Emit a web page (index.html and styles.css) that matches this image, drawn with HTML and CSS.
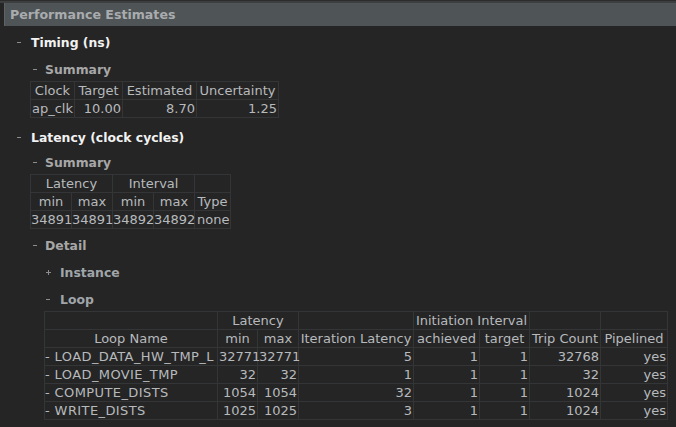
FILE: index.html
```html
<!DOCTYPE html>
<html>
<head>
<meta charset="utf-8">
<link rel="stylesheet" href="styles.css">
</head>
<body>
<div class="topstrip"></div>
<div class="titlebar">Performance Estimates</div>
<div class="content">
  <div class="node l1 timing"><span class="tg"><span class="minus"></span></span><span class="t1">Timing (ns)</span></div>
  <div class="node l2 sum1"><span class="tg"><span class="minus"></span></span><span class="t2">Summary</span></div>
  <table class="grid timingtab">
    <colgroup><col class="w44"><col class="w48"><col class="w74"><col class="w82"></colgroup>
    <tr><th>Clock</th><th>Target</th><th>Estimated</th><th>Uncertainty</th></tr>
    <tr><td class="l">ap_clk</td><td>10.00</td><td>8.70</td><td>1.25</td></tr>
  </table>
  <div class="node l1 lat"><span class="tg"><span class="minus"></span></span><span class="t1">Latency (clock cycles)</span></div>
  <div class="node l2 sum2"><span class="tg"><span class="minus"></span></span><span class="t2">Summary</span></div>
  <table class="grid lattab">
    <colgroup><col class="w41"><col class="w41"><col class="w41"><col class="w41"><col class="w36"></colgroup>
    <tr><th colspan="2">Latency</th><th colspan="2">Interval</th><th></th></tr>
    <tr><th>min</th><th>max</th><th>min</th><th>max</th><th>Type</th></tr>
    <tr><td>34891</td><td>34891</td><td>34892</td><td>34892</td><td class="l type">none</td></tr>
  </table>
  <div class="node l2 detail"><span class="tg"><span class="minus"></span></span><span class="t2">Detail</span></div>
  <div class="node l3 inst"><span class="tg"><span class="plus"></span></span><span class="t3">Instance</span></div>
  <div class="node l3 loop"><span class="tg"><span class="minus"></span></span><span class="t3">Loop</span></div>
  <table class="grid looptab">
    <colgroup><col class="w173"><col class="w40"><col class="w41"><col class="w115"><col class="w66"><col class="w50"><col class="w71"><col class="w67"></colgroup>
    <tr><th></th><th colspan="2">Latency</th><th></th><th colspan="2">Initiation Interval</th><th></th><th></th></tr>
    <tr><th>Loop Name</th><th>min</th><th>max</th><th>Iteration Latency</th><th>achieved</th><th>target</th><th>Trip Count</th><th>Pipelined</th></tr>
    <tr><td class="l name">- LOAD_DATA_HW_TMP_L</td><td>32771</td><td>32771</td><td>5</td><td>1</td><td>1</td><td>32768</td><td>yes</td></tr>
    <tr><td class="l name">- LOAD_MOVIE_TMP</td><td>32</td><td>32</td><td>1</td><td>1</td><td>1</td><td>32</td><td>yes</td></tr>
    <tr><td class="l name">- COMPUTE_DISTS</td><td>1054</td><td>1054</td><td>32</td><td>1</td><td>1</td><td>1024</td><td>yes</td></tr>
    <tr><td class="l name">- WRITE_DISTS</td><td>1025</td><td>1025</td><td>3</td><td>1</td><td>1</td><td>1024</td><td>yes</td></tr>
  </table>
</div>
</body>
</html>
```
FILE: styles.css
```css
html, body {
  margin: 0;
  padding: 0;
  background: #252525;
  height: 100%;
  overflow: hidden;
}
body {
  font-family: "DejaVu Sans", sans-serif;
  font-size: 13px;
  color: #b7babd;
}
.topstrip {
  height: 1px;
  background: #2c2c2c;
  border-bottom: 2px solid #3d3e3f;
}
.titlebar {
  margin-left: 4px;
  height: 23px;
  line-height: 23px;
  background: #4f5457;
  border-left: 1px solid #5e6265;
  padding-left: 5px;
  font-weight: bold;
  font-size: 12.6px;
  color: #a9acae;
}
.node {
  display: flex;
  align-items: center;
  height: 24px;
  font-weight: bold;
  font-size: 12.4px;
  white-space: nowrap;
}
.tg {
  display: flex;
  align-items: center;
  flex: none;
}
.minus {
  display: block;
  width: 4px;
  height: 1px;
  background: #8c8c8c;
}
.plus {
  display: block;
  position: relative;
  width: 5px;
  height: 5px;
}
.plus::before, .plus::after {
  content: "";
  position: absolute;
  background: #8c8c8c;
}
.plus::before { left: 0; top: 2px; width: 5px; height: 1px; }
.plus::after { left: 2px; top: 0; width: 1px; height: 5px; }
.l1 { padding-left: 17px; }
.l1 .tg { width: 14px; }
.l2 { padding-left: 33px; }
.l2 .tg { width: 12px; }
.l3 { padding-left: 46px; }
.l3 .tg { width: 14px; }
.t1 { color: #f2f2f2; }
.t2 { color: #a7a7a7; }
.t3 { color: #a0a5aa; }

.timing { margin-top: 4px; }
.sum1 { margin-top: 3px; }
.lat { margin-top: 7px; }
.sum2 { margin-top: 1px; }
.detail { margin-top: 4px; }
.inst { margin-top: 3px; }
.loop { margin-top: 3px; }

.w36 { width: 36px; }
.w40 { width: 40px; }
.w41 { width: 41px; }
.w44 { width: 44px; }
.w48 { width: 48px; }
.w50 { width: 50px; }
.w66 { width: 66px; }
.w67 { width: 67px; }
.w71 { width: 71px; }
.w74 { width: 74px; }
.w82 { width: 82px; }
.w115 { width: 115px; }
.w173 { width: 173px; }

.grid {
  border-collapse: collapse;
  table-layout: fixed;
  border: 1px solid #343536;
}
.grid th, .grid td {
  border: 1px solid #343536;
  height: 17px;
  padding: 0 1px;
  font-weight: normal;
  white-space: nowrap;
  line-height: 17px;
  text-align: right;
}
.grid th { text-align: center; }
.grid td.l { text-align: left; }
.grid td.name { padding-left: 0; letter-spacing: 0.4px; overflow: hidden; }
.timingtab { margin-left: 30px; width: 249px; }
.lattab { margin-left: 30px; width: 201px; }
.lattab th, .lattab td { padding: 0; }
.lattab td.type { padding-left: 2px; }
.looptab { margin-left: 44px; width: 624px; }
```
